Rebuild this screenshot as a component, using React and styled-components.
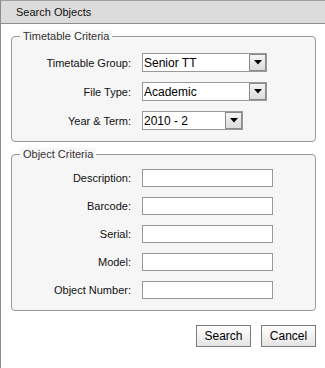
import React from 'react';
import styled, { createGlobalStyle } from 'styled-components';

const GlobalStyle = createGlobalStyle`
  html, body {
    margin: 0;
    padding: 0;
    background: #ffffff;
  }
  body {
    font-family: "Liberation Sans", Arial, sans-serif;
    font-size: 11px;
    color: #000;
  }
`;

const Window = styled.div`
  box-sizing: border-box;
  min-height: 100vh;
  border-left: 1px solid #8c8c8c;
  background: #ffffff;
`;

const TitleBar = styled.header`
  height: 22px;
  border-top: 1px solid #a0a0a0;
  border-bottom: 1px solid #8c8c8c;
  background: #dcdcdc;
  display: flex;
  align-items: center;
  padding-left: 15px;
  font-size: 11px;
  color: #111;
`;

const Body = styled.div`
  padding: 6px 9px 0 10px;
`;

const Group = styled.fieldset`
  margin: ${p => (p.$first ? '0' : '6px')} 0 0 0;
  padding: 0 0 ${p => p.$bottom}px 0;
  border: 1px solid #9a9a9a;
  border-radius: 4px;
  background: #f6f6f6;
  min-width: 0;
`;

const Legend = styled.legend`
  margin-left: 8px;
  padding: 0 3px;
  line-height: 12px;
  font-size: 11px;
  color: #333;
  background: #f6f6f6;
`;

const Rows = styled.div`
  display: grid;
  grid-template-columns: 119px auto;
  column-gap: 11px;
  row-gap: ${p => p.$gap}px;
  align-items: center;
  margin-top: ${p => p.$top}px;
`;

const Label = styled.label`
  text-align: right;
  font-size: 11px;
  color: #111;
  white-space: nowrap;
`;

const Select = styled.div`
  box-sizing: border-box;
  width: ${p => p.$width}px;
  height: 19px;
  border: 1px solid #999;
  background: #fff;
  display: flex;
  align-items: center;
  justify-content: space-between;
  padding: 0 0 0 1px;
  font-size: 12px;
  color: #000;
`;

const ArrowButton = styled.span`
  box-sizing: border-box;
  width: 17px;
  height: 17px;
  border: 1px solid #8a8a8a;
  background: linear-gradient(#f4f4f4, #dcdcdc);
  display: flex;
  align-items: center;
  justify-content: center;
`;

const TextInput = styled.input`
  box-sizing: border-box;
  width: 131px;
  height: 18px;
  margin: 0;
  border: 1px solid #999;
  background: #fff;
  padding: 0 2px;
  font-family: inherit;
  font-size: 11px;
`;

const Actions = styled.div`
  display: flex;
  justify-content: flex-end;
  gap: 10px;
  margin-top: 14px;
`;

const Button = styled.button`
  box-sizing: border-box;
  width: 55px;
  height: 22px;
  border: 1px solid #7a7a7a;
  border-radius: 0;
  background: linear-gradient(#ffffff, #e4e4e4);
  font-family: "Liberation Sans", Arial, sans-serif;
  font-size: 12px;
  color: #000;
  padding: 0;
`;

const Arrow = () => (
  <svg width="8" height="5" viewBox="0 0 8 5">
    <path d="M0 0 H8 L4 4.5 Z" fill="#000" />
  </svg>
);

const Dropdown = ({ value, width }) => (
  <Select $width={width}>
    <span>{value}</span>
    <ArrowButton>
      <Arrow />
    </ArrowButton>
  </Select>
);

const objectFields = ['Description', 'Barcode', 'Serial', 'Model', 'Object Number'];

function App() {
  return (
    <Window>
      <GlobalStyle />
      <TitleBar>Search Objects</TitleBar>
      <Body>
        <Group $first $bottom={11}>
          <Legend>Timetable Criteria</Legend>
          <Rows $top={11} $gap={10}>
            <Label>Timetable Group:</Label>
            <Dropdown value="Senior TT" width={125} />
            <Label>File Type:</Label>
            <Dropdown value="Academic" width={125} />
            <Label>Year &amp; Term:</Label>
            <Dropdown value="2010 - 2" width={101} />
          </Rows>
        </Group>
        <Group $bottom={11}>
          <Legend>Object Criteria</Legend>
          <Rows $top={9} $gap={10}>
            {objectFields.map(f => (
              <React.Fragment key={f}>
                <Label>{f}:</Label>
                <TextInput type="text" />
              </React.Fragment>
            ))}
          </Rows>
        </Group>
        <Actions>
          <Button>Search</Button>
          <Button>Cancel</Button>
        </Actions>
      </Body>
    </Window>
  );
}

export default App;
